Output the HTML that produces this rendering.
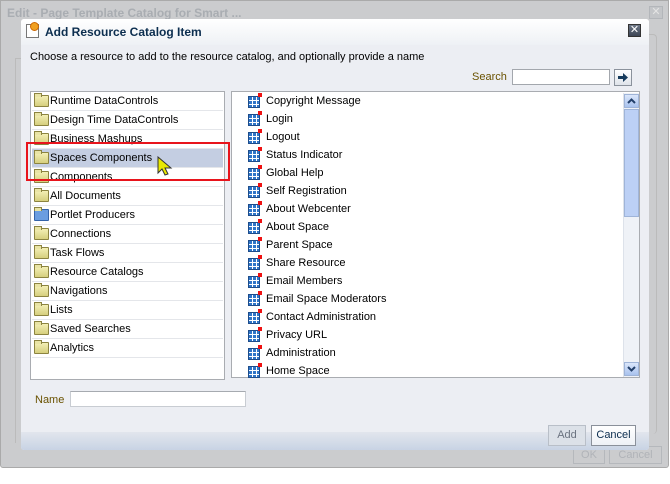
<!DOCTYPE html>
<html><head><meta charset="utf-8"><style>
*{margin:0;padding:0;box-sizing:border-box}
body{width:670px;height:484px;background:#fff;font-family:"Liberation Sans",sans-serif;font-size:11px;color:#000;position:relative;overflow:hidden}
.abs{position:absolute}
.outer{left:0;top:0;width:669px;height:468px;background:#cbccce;border:1px solid #aaa;border-radius:0 0 3px 3px}
.otitle{left:7px;top:6px;font-weight:bold;font-size:12px;color:#a9adb2}
.dlg{left:21px;top:19px;width:628px;height:431px;background:#eceef3;border-radius:3px;overflow:hidden}
.dhead{left:0;top:0;width:628px;height:26px;background:linear-gradient(#fff,#eef1f5)}
.dtitle{left:24px;top:6px;font-weight:bold;font-size:12px;color:#0c2e4f}
.list{background:#fff;border:1px solid #a9acb1}
.row{position:absolute;left:1px;height:19px;width:191px;border-bottom:1px solid #e4e6ea;line-height:18px;padding-left:18px;white-space:nowrap}
.fold{position:absolute;left:2px;top:3px;width:15px;height:12px;background:linear-gradient(#f3efb5,#d6cf7e);border:1px solid #8c8440;border-radius:1px}
.fold:before{content:"";position:absolute;left:-1px;top:-3px;width:6px;height:3px;background:#e9e4a5;border:1px solid #8c8440;border-bottom:none}
.ri{position:absolute;left:16px;height:18px;line-height:18px;padding-left:18px;white-space:nowrap}
.grid{position:absolute;left:0;top:4px;width:12px;height:12px;background:
linear-gradient(90deg,transparent 3px,#fff 3px,#fff 4px,transparent 4px,transparent 7px,#fff 7px,#fff 8px,transparent 8px),
linear-gradient(transparent 3px,#fff 3px,#fff 4px,transparent 4px,transparent 7px,#fff 7px,#fff 8px,transparent 8px),#2f75c8;border:1px solid #1d4c8a}
.grid:after{content:"";position:absolute;right:-3px;top:-4px;width:4px;height:4px;background:#e11}
.btn{border:1px solid #9ea4ad;text-align:center;line-height:19px;font-size:11px}
</style></head><body>
<div class="abs outer"></div>
<div class="abs otitle">Edit - Page Template Catalog for Smart ...</div>
<div class="abs" style="left:649px;top:6px;width:14px;height:13px;border:1px solid #b3b6ba;background:#c3c5c8;color:#e4e4e4;font-size:11px;line-height:11px;text-align:center">✕</div>
<div class="abs" style="left:15px;top:58px;width:6px;height:385px;border-left:1px solid #bbb;border-top:1px solid #bbb"></div>
<div class="abs" style="left:649px;top:34px;width:8px;height:400px;border-right:1px solid #bbb;border-top:1px solid #bbb;border-radius:0 4px 4px 0"></div>
<div class="abs btn" style="left:573px;top:446px;width:32px;height:18px;line-height:16px;color:#b0b3b8;border-color:#b5b8bc">OK</div>
<div class="abs btn" style="left:609px;top:446px;width:53px;height:18px;line-height:16px;color:#b0b3b8;border-color:#b5b8bc">Cancel</div>

<div class="abs dlg">
 <div class="abs dhead"></div>
 <div class="abs" style="left:5px;top:5px;width:13px;height:14px;background:#fff;border:1px solid #777"></div>
 <div class="abs" style="left:9px;top:3px;width:9px;height:9px;background:#f0a020;border-radius:50%;border:1px solid #c60"></div>
 <div class="abs dtitle">Add Resource Catalog Item</div>
 <div class="abs" style="left:607px;top:5px;width:13px;height:13px;background:linear-gradient(#6d7786,#3d4656);border:1px solid #333;color:#fff;font-size:11px;line-height:11px;text-align:center">✕</div>
 <div class="abs" style="left:9px;top:32px;font-size:11px">Choose a resource to add to the resource catalog, and optionally provide a name</div>
 <div class="abs" style="left:451px;top:52px;color:#6a5200">Search</div>
 <div class="abs" style="left:491px;top:50px;width:98px;height:16px;background:#fff;border:1px solid #a3a7ad"></div>
 <div class="abs" style="left:593px;top:50px;width:18px;height:17px;background:linear-gradient(#fff,#dfe3ea);border:1px solid #8b929c"><svg width="16" height="15" viewBox="0 0 16 15"><path d="M3 6h5V3l5 4.5-5 4.5V9H3z" fill="#163a5c"/></svg></div>

 <div class="abs list" style="left:9px;top:72px;width:195px;height:289px">
  <div class="row" style="top:0"><i class="fold"></i>Runtime DataControls</div>
  <div class="row" style="top:19px"><i class="fold"></i>Design Time DataControls</div>
  <div class="row" style="top:38px"><i class="fold"></i>Business Mashups</div>
  <div class="row" style="top:57px;background:#c4cee2"><i class="fold"></i>Spaces Components</div>
  <div class="row" style="top:76px"><i class="fold"></i>Components</div>
  <div class="row" style="top:95px"><i class="fold"></i>All Documents</div>
  <div class="row" style="top:114px"><i class="fold" style="background:#6a9de0;border-color:#3463a8"></i>Portlet Producers</div>
  <div class="row" style="top:133px"><i class="fold"></i>Connections</div>
  <div class="row" style="top:152px"><i class="fold"></i>Task Flows</div>
  <div class="row" style="top:171px"><i class="fold"></i>Resource Catalogs</div>
  <div class="row" style="top:190px"><i class="fold"></i>Navigations</div>
  <div class="row" style="top:209px"><i class="fold"></i>Lists</div>
  <div class="row" style="top:228px"><i class="fold"></i>Saved Searches</div>
  <div class="row" style="top:247px"><i class="fold"></i>Analytics</div>
 </div>
 <div class="abs" style="left:5px;top:123px;width:204px;height:39px;border:2px solid #e8141c"></div>
 <svg class="abs" style="left:136px;top:137px" width="16" height="22" viewBox="0 0 16 22"><path d="M1 1v16l4-4 3 6 3-1-3-6h6z" fill="#e8e800" stroke="#333" stroke-width="1"/></svg>

 <div class="abs list" style="left:210px;top:72px;width:409px;height:287px">
  <div class="ri" style="top:0"><i class="grid"></i>Copyright Message</div>
  <div class="ri" style="top:18px"><i class="grid"></i>Login</div>
  <div class="ri" style="top:36px"><i class="grid"></i>Logout</div>
  <div class="ri" style="top:54px"><i class="grid"></i>Status Indicator</div>
  <div class="ri" style="top:72px"><i class="grid"></i>Global Help</div>
  <div class="ri" style="top:90px"><i class="grid"></i>Self Registration</div>
  <div class="ri" style="top:108px"><i class="grid"></i>About Webcenter</div>
  <div class="ri" style="top:126px"><i class="grid"></i>About Space</div>
  <div class="ri" style="top:144px"><i class="grid"></i>Parent Space</div>
  <div class="ri" style="top:162px"><i class="grid"></i>Share Resource</div>
  <div class="ri" style="top:180px"><i class="grid"></i>Email Members</div>
  <div class="ri" style="top:198px"><i class="grid"></i>Email Space Moderators</div>
  <div class="ri" style="top:216px"><i class="grid"></i>Contact Administration</div>
  <div class="ri" style="top:234px"><i class="grid"></i>Privacy URL</div>
  <div class="ri" style="top:252px"><i class="grid"></i>Administration</div>
  <div class="ri" style="top:270px"><i class="grid"></i>Home Space</div>
  <div class="abs" style="left:391px;top:1px;width:16px;height:284px;background:#eff2f7;border-left:1px solid #dde2ea"></div>
  <div class="abs" style="left:392px;top:2px;width:15px;height:14px;background:linear-gradient(#dbe6fb,#a9c2ee);border:1px solid #9fb4d8"><svg width="13" height="12"><path d="M3 8l3.5-3.5L10 8" stroke="#23406a" stroke-width="2" fill="none"/></svg></div>
  <div class="abs" style="left:392px;top:17px;width:15px;height:108px;background:#bcd0f5;border:1px solid #9fb4d8"></div>
  <div class="abs" style="left:392px;top:270px;width:15px;height:14px;background:linear-gradient(#dbe6fb,#a9c2ee);border:1px solid #9fb4d8"><svg width="13" height="12"><path d="M3 4l3.5 3.5L10 4" stroke="#23406a" stroke-width="2" fill="none"/></svg></div>
 </div>

 <div class="abs" style="left:14px;top:375px;color:#6a5200">Name</div>
 <div class="abs" style="left:49px;top:372px;width:176px;height:16px;background:#fff;border:1px solid #c8ccd2;border-top-color:#a6aab0"></div>

 <div class="abs" style="left:0;top:413px;width:628px;height:18px;background:linear-gradient(#e2e6ed,#c8d3e4)"></div>
 <div class="abs btn" style="left:527px;top:406px;width:38px;height:21px;background:#dce1e8;color:#6b7380;border-color:#b9bfc8">Add</div>
 <div class="abs btn" style="left:570px;top:406px;width:45px;height:21px;background:linear-gradient(#fff,#eef1f6);color:#0c2e4f;border-color:#8a909a">Cancel</div>
</div>
</body></html>
